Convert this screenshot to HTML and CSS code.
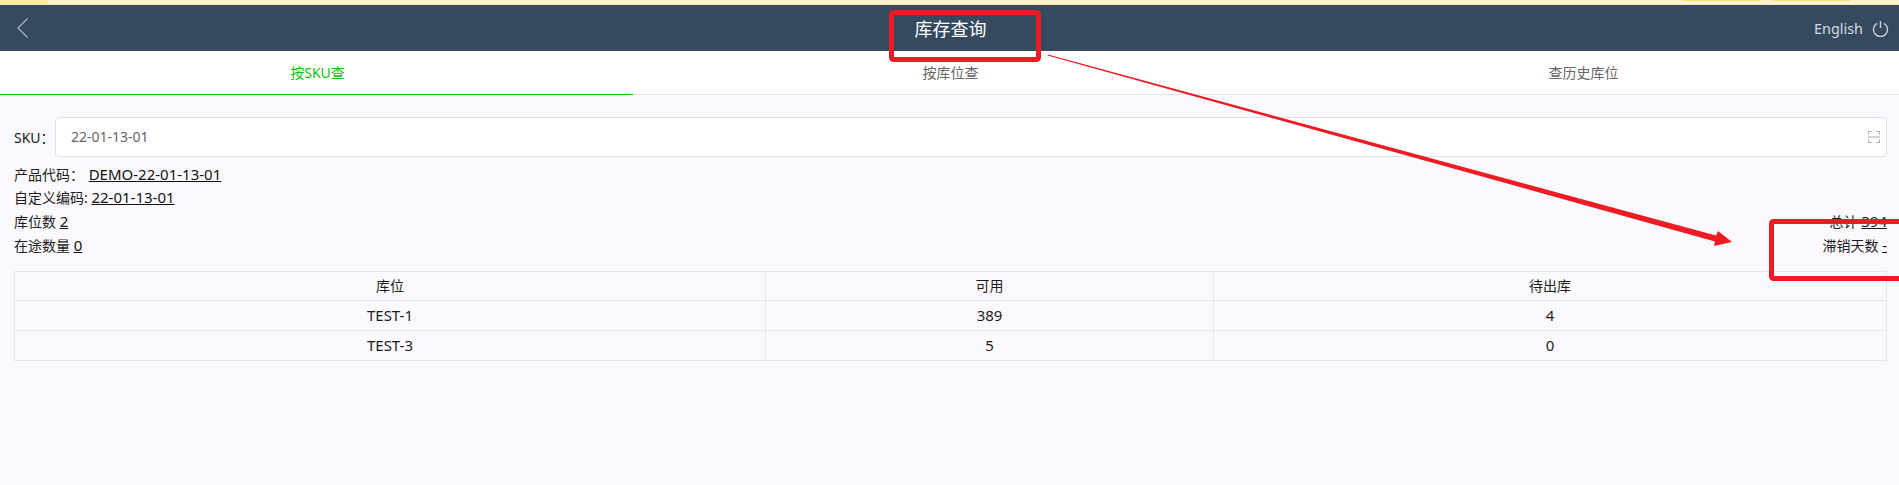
FILE: index.html
```html
<!DOCTYPE html>
<html lang="zh-CN">
<head>
<meta charset="utf-8">
<title>库存查询</title>
<link rel="stylesheet" href="styles.css">
</head>
<body>
<div class="notice">
  <span class="notice-left"></span>
  <span class="notice-btn"></span>
  <span class="notice-btn"></span>
</div>
<header class="topbar">
  <svg class="back" width="14" height="22" viewBox="0 0 14 22"><path d="M11.5 1.5 2 11l9.5 9.5" fill="none" stroke="#a9b3bd" stroke-width="1.3"/></svg>
  <h1 class="title">库存查询</h1>
  <div class="topbar-right">
    <span class="lang">English</span>
    <svg class="power" width="17" height="17" viewBox="0 0 17 17"><path d="M5 3.4a7 7 0 1 0 7 0" fill="none" stroke="#ccd3da" stroke-width="1.4"/><path d="M8.5 1v7" fill="none" stroke="#ccd3da" stroke-width="1.4"/></svg>
  </div>
</header>
<nav class="tabs">
  <div class="tab tab-active">按SKU查</div>
  <div class="tab">按库位查</div>
  <div class="tab">查历史库位</div>
</nav>
<main class="content">
  <div class="search">
    <label class="search-label">SKU：</label>
    <div class="search-box">
      <span class="search-value">22-01-13-01</span>
      <svg class="scan" width="12" height="12" viewBox="0 0 12 12"><path d="M0.5 3.5v-3h3.5M8 .5h3.5v3M0.5 8.5v3h3.5M8 11.5h3.5v-3M0 6h12" fill="none" stroke="#a3acb8" stroke-width="1"/></svg>
    </div>
  </div>
  <div class="info">
    <div class="line">产品代码： <a class="val val-code">DEMO-22-01-13-01</a></div>
    <div class="line">自定义编码: <a class="val">22-01-13-01</a></div>
    <div class="stats">
      <div class="stat-col">
        <div class="line line-stat">库位数 <a class="val">2</a></div>
        <div class="line line-stat">在途数量 <a class="val">0</a></div>
      </div>
      <div class="stat-col stat-right">
        <div class="line line-stat">总计 <a class="val">394</a></div>
        <div class="line line-stat">滞销天数 <a class="val">-</a></div>
      </div>
    </div>
  </div>
  <table class="grid">
    <thead>
      <tr><th class="c1">库位</th><th class="c2">可用</th><th class="c3">待出库</th></tr>
    </thead>
    <tbody>
      <tr><td>TEST-1</td><td>389</td><td>4</td></tr>
      <tr><td>TEST-3</td><td>5</td><td>0</td></tr>
    </tbody>
  </table>
</main>
<svg class="marks" width="1899" height="485" viewBox="0 0 1899 485">
  <rect x="891.5" y="12.5" width="147" height="47" rx="2" fill="none" stroke="#ed1c24" stroke-width="5"/>
  <rect x="1771.5" y="221.5" width="140" height="57" rx="2" fill="none" stroke="#ed1c24" stroke-width="5"/>
  <polygon points="1048,54.5 1716,235.5 1718,231 1732,242 1714,246 1715,241.5 1047.6,55.5" fill="#ed1c24"/>
</svg>
</body>
</html>
```

FILE: styles.css
```css
* { box-sizing: border-box; }
html, body { margin: 0; padding: 0; }
body {
  width: 1899px;
  height: 485px;
  overflow: hidden;
  position: relative;
  background: #fbf9fe;
  color: #1c1c1c;
  font-family: "Noto Sans", "Noto Sans CJK SC", sans-serif;
  font-size: 14px;
}
.notice {
  height: 5px;
  background: #fff3c9;
  display: flex;
  align-items: flex-start;
  border-bottom: 1px solid #f7e9b8;
}
.notice-left { width: 48px; height: 4px; background: #ffe99b; margin-right: 1635px; }
.notice-btn { width: 77px; height: 1px; background: #f2dc80; margin-right: 13px; }
.topbar {
  height: 46px;
  background: #364a5f;
  display: flex;
  align-items: center;
  justify-content: space-between;
  position: relative;
  padding: 0 10px 0 16px;
}
.back { display: block; }
.title {
  margin: 0;
  position: absolute;
  left: 0;
  right: 0;
  top: 12px;
  padding-left: 2px;
  text-align: center;
  font-size: 18px;
  font-weight: 400;
  line-height: 24px;
  color: #fff;
}
.topbar-right { display: flex; align-items: center; gap: 9px; }
.lang { color: #d3dae0; font-size: 14.4px; }
.power { display: block; }
.tabs {
  height: 44px;
  background: #fff;
  display: flex;
  border-bottom: 1px solid #e3e3e8;
}
.tab {
  flex: 1;
  text-align: center;
  line-height: 43px;
  color: #666;
  font-size: 14px;
  padding-left: 2px;
}
.tab-active {
  color: #10c010;
  height: 44px;
  border-bottom: 1px solid #10c010;
}
.content { padding: 22px 12px 0 14px; }
.search { display: flex; align-items: center; height: 40px; }
.search-label { width: 41px; white-space: nowrap; }
.search-box {
  flex: 1;
  height: 40px;
  background: #fff;
  border: 1px solid #dfdfe8;
  border-radius: 4px;
  display: flex;
  align-items: center;
  justify-content: space-between;
  padding: 0 6px 2px 15px;
}
.search-value { color: #666; font-size: 14px; }
.scan { display: block; margin-top: 2px; }
.info { margin-top: 6px; }
.line { line-height: 22px; height: 23px; white-space: nowrap; }
.line-stat { height: 24px; line-height: 24px; }
.val { color: #111; text-decoration: underline; font-size: 15px; }
.val-code { margin-left: 1px; }
.stats { display: flex; justify-content: space-between; }
.stat-right { text-align: right; }
.grid {
  width: 100%;
  margin-top: 14px;
  border-collapse: collapse;
  table-layout: fixed;
}
.grid th, .grid td {
  border: 1px solid #e6e6ec;
  padding: 0 0 2px;
  text-align: center;
  font-weight: 400;
}
.grid th { height: 29px; font-size: 14px; }
.grid td { height: 30px; font-size: 15px; }
.c1 { width: 751px; }
.c2 { width: 448px; }
.marks { position: absolute; left: 0; top: 0; pointer-events: none; }
```
